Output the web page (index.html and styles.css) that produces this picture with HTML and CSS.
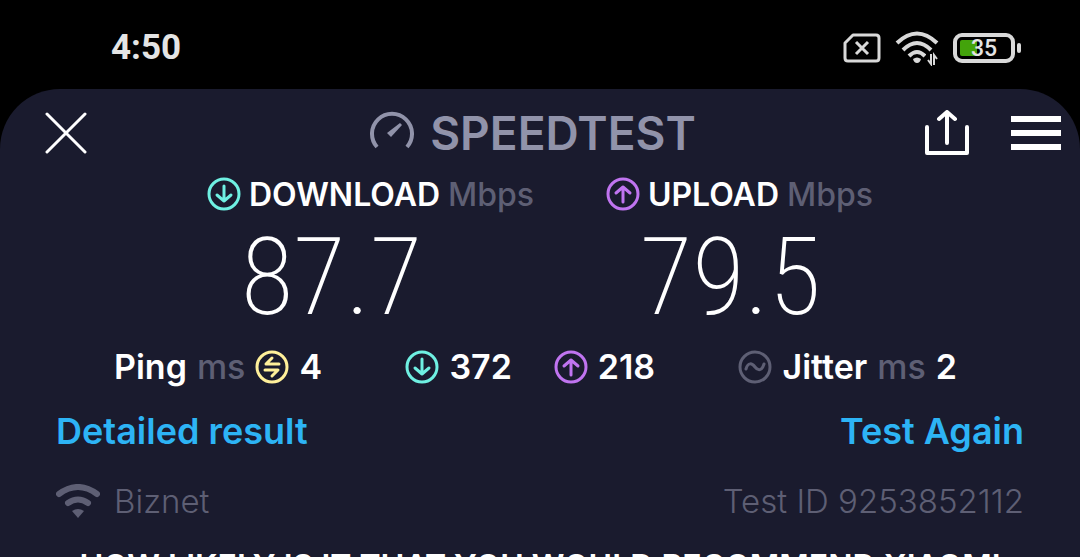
FILE: index.html
```html
<!DOCTYPE html>
<html lang="en">
<head>
    <meta charset="UTF-8">
    <meta name="viewport" content="width=device-width, initial-scale=1.0">
    <title>Speedtest</title>
    <link rel="stylesheet" href="styles.css">
</head>
<body>
    <div class="statusBar">
        <span class="time">4:50</span>
        <div class="statusIcons">
            <svg width="38" height="30" viewBox="0 0 38 30" fill="none" stroke="#d9d9d9" stroke-width="3" stroke-linejoin="round">
                <path d="M10 2H33Q36 2 36 5V25Q36 28 33 28H5Q2 28 2 25V10Z"/>
                <path d="M13 9L25 21M25 9L13 21"/>
            </svg>
            <svg width="44" height="36" viewBox="0 0 44 36" fill="none" stroke="#d9d9d9" stroke-width="4">
                <path d="M2 13Q22 -6 42 13M8 20Q22 6 36 20M14 26Q22 18 30 26"/>
                <path d="M18 29Q22 26 26 29Q25 33 22 33Q19 33 18 29Z" fill="#d9d9d9" stroke="none"/>
                <path d="M31 22H44V36H31Z" fill="#000" stroke="none"/>
                <path d="M36 24V34L33 30M39 35V25L42 29" stroke-width="2"/>
            </svg>
            <div class="battery">
                <div class="batteryLevel"></div>
                <span class="batteryText">35</span>
            </div>
        </div>
    </div>
    <div class="panel">
        <header class="header">
            <button class="iconButton closeButton" aria-label="Close">
                <svg width="42" height="42" viewBox="0 0 42 42" stroke="#fff" stroke-width="3" stroke-linecap="round">
                    <path d="M2 2L40 40M40 2L2 40"/>
                </svg>
            </button>
            <div class="logo">
                <svg width="46" height="46" viewBox="0 0 46 46" fill="none">
                    <path d="M9 37A20 20 0 1 1 39 37" stroke="#9193aa" stroke-width="4"/>
                    <path d="M32 13L34 15L23 27L19 23Z" fill="#9193aa"/>
                </svg>
                <span>SPEEDTEST</span>
            </div>
            <div class="actions">
                <button class="iconButton" aria-label="Share">
                    <svg width="44" height="46" viewBox="0 0 44 46" fill="none" stroke="#fff" stroke-width="4" stroke-linecap="round" stroke-linejoin="round">
                        <path d="M2 17V43H42V17M22 33V3M14 9L22 2L30 9"/>
                    </svg>
                </button>
                <button class="iconButton" aria-label="Menu">
                    <svg width="50" height="34" viewBox="0 0 50 34" fill="#fff">
                        <path d="M0 0H50V6H0ZM0 14H50V20H0ZM0 28H50V34H0Z"/>
                    </svg>
                </button>
            </div>
        </header>

        <div class="results">
            <div class="result">
                <div class="resultTitle">
                    <svg class="down" width="34" height="34" viewBox="0 0 34 34">
                        <circle cx="17" cy="17" r="15"/>
                        <path d="M17 9V24M10 18L17 24L24 18"/>
                    </svg>
                    <span>DOWNLOAD</span>
                    <span class="unit">Mbps</span>
                </div>
                <div class="speed">87.7</div>
            </div>
            <div class="result">
                <div class="resultTitle">
                    <svg class="up" width="34" height="34" viewBox="0 0 34 34">
                        <circle cx="17" cy="17" r="15"/>
                        <path d="M17 25V10M10 16L17 10L24 16"/>
                    </svg>
                    <span>UPLOAD</span>
                    <span class="unit">Mbps</span>
                </div>
                <div class="speed">79.5</div>
            </div>
        </div>

        <div class="stats">
            <div class="stat">
                <span>Ping</span>
                <span class="unit">ms</span>
                <svg class="idle" width="34" height="34" viewBox="0 0 34 34">
                    <circle cx="17" cy="17" r="15"/>
                    <path d="M24 14H11L17 8M10 20H23L17 26"/>
                </svg>
                <span>4</span>
            </div>
            <div class="loaded">
                <div class="stat">
                    <svg class="down" width="34" height="34" viewBox="0 0 34 34">
                        <circle cx="17" cy="17" r="15"/>
                        <path d="M17 9V24M10 18L17 24L24 18"/>
                    </svg>
                    <span>372</span>
                </div>
                <div class="stat">
                    <svg class="up" width="34" height="34" viewBox="0 0 34 34">
                        <circle cx="17" cy="17" r="15"/>
                        <path d="M17 25V10M10 16L17 10L24 16"/>
                    </svg>
                    <span>218</span>
                </div>
            </div>
            <div class="stat">
                <svg class="jitter" width="34" height="34" viewBox="0 0 34 34">
                    <circle cx="17" cy="17" r="15"/>
                    <path d="M8 19C10 12 14 13 17 17C20 21 24 21 26 14"/>
                </svg>
                <span>Jitter</span>
                <span class="unit">ms</span>
                <span>2</span>
            </div>
        </div>

        <div class="row links">
            <a href="#">Detailed result</a>
            <a href="#">Test Again</a>
        </div>
        <div class="row info">
            <div class="provider">
                <svg width="44" height="34" viewBox="0 0 44 34" fill="none" stroke="#5e5f74" stroke-width="6" stroke-linecap="round">
                    <path d="M3 10Q22 -4 41 10M12 19Q22 12 32 19"/>
                    <path d="M16 27Q22 23 28 27L22 34Z" fill="#5e5f74" stroke="none"/>
                </svg>
                <span>Biznet</span>
            </div>
            <span>Test ID 9253852112</span>
        </div>
        <div class="survey">HOW LIKELY IS IT THAT YOU WOULD RECOMMEND XIAOMI</div>
    </div>
</body>
</html>
```
FILE: styles.css
```css
html,body {
    height: 100%;
}
body {
    margin: 0;
    background: #000;
    color: #fff;
    font-family: Inter, "Liberation Sans", sans-serif;
    overflow: hidden;
    display: flex;
    flex-flow: column;
}
svg {
    display: block;
    flex: none;
}
.statusBar {
    flex: none;
    display: flex;
    justify-content: space-between;
    align-items: center;
    padding: 6px 65px 0 111px;
    height: 83px;
    color: #e4e4e4;
    font-family: Roboto, sans-serif;
}
.time {
    font-size: 35px;
    font-weight: 700;
}
.statusIcons {
    display: flex;
    align-items: center;
    gap: 14px;
}
.battery {
    position: relative;
    box-sizing: border-box;
    width: 62px;
    height: 30px;
    border: 4px solid #d9d9d9;
    border-radius: 9px;
    text-align: center;
}
.battery::after {
    content: "";
    position: absolute;
    right: -10px;
    top: 6px;
    width: 4px;
    height: 10px;
    border-radius: 2px;
    background: #d9d9d9;
}
.batteryLevel {
    position: absolute;
    left: 3px;
    top: 3px;
    width: 17px;
    height: 16px;
    border-radius: 2px;
    background: #43a30b;
}
.batteryText {
    position: relative;
    display: block;
    font-size: 23px;
    font-weight: 500;
    line-height: 24px;
}
.panel {
    flex: 1;
    background: #1a1b2e;
    border-radius: 60px 60px 0 0;
}
.header {
    display: grid;
    grid-template-columns: 1fr auto 1fr;
    align-items: center;
    height: 88px;
    padding: 0 19px 0 3px;
}
.iconButton {
    padding: 0;
    border: 0;
    background: none;
    cursor: pointer;
}
.closeButton {
    justify-self: start;
    margin-left: 42px;
}
.logo {
    display: flex;
    align-items: center;
    gap: 16px;
    color: #9193aa;
    font-size: 46px;
    font-weight: 600;
}
.actions {
    display: flex;
    justify-content: flex-end;
    align-items: center;
    gap: 42px;
}
.results {
    display: flex;
    justify-content: space-between;
    padding: 0 207px;
}
.resultTitle {
    display: flex;
    align-items: center;
    gap: 8px;
    height: 34px;
    font-size: 32px;
    font-weight: 600;
}
.unit {
    color: #5e5f74;
    font-weight: 500;
}
.speed {
    margin: 16px 0 22px 34px;
    font-family: "Roboto Condensed", Roboto, sans-serif;
    font-size: 108px;
    font-weight: 200;
    line-height: 100px;
}
.down,.up,.idle,.jitter {
    fill: none;
    stroke-width: 3;
    stroke-linecap: round;
    stroke-linejoin: round;
}
.down {
    stroke: #6ff0e2;
}
.up {
    stroke: #c074f0;
}
.idle {
    stroke: #fff09a;
}
.jitter {
    stroke: #5e5f74;
}
.stats {
    display: flex;
    justify-content: space-between;
    padding: 0 123px 0 114px;
    font-size: 34px;
    font-weight: 600;
    line-height: 36px;
}
.stat {
    display: flex;
    align-items: center;
    gap: 10px;
}
.loaded {
    display: flex;
    gap: 42px;
}
.row {
    display: flex;
    justify-content: space-between;
    align-items: center;
    padding: 0 56px;
    font-size: 33px;
    line-height: 40px;
}
.links {
    margin-top: 26px;
    font-size: 36px;
    font-weight: 600;
}
.links a {
    color: #2db4f5;
    text-decoration: none;
}
.info {
    margin-top: 30px;
    color: #5e5f74;
    font-weight: 300;
}
.provider {
    display: flex;
    align-items: center;
    gap: 14px;
}
.survey {
    margin-top: 24px;
    font-size: 32px;
    font-weight: 600;
    line-height: 44px;
    text-align: center;
    white-space: nowrap;
}
```
